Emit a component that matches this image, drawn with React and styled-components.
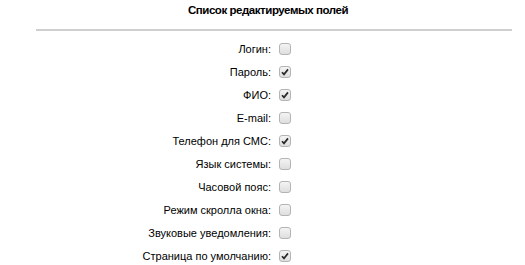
import React from "react";
import styled, { createGlobalStyle } from "styled-components";

const Global = createGlobalStyle`
  html, body { margin: 0; padding: 0; background: #fff; }
  body { font-family: "Liberation Sans", Arial, sans-serif; }
`;

const Page = styled.div`
  width: 525px;
  height: 265px;
  overflow: hidden;
`;

const Title = styled.div`
  height: 21px;
  line-height: 21px;
  font-size: 11.5px;
  font-weight: bold;
  letter-spacing: -0.45px;
  color: #000;
  text-align: center;
  padding-left: 11px;
`;

const Rule = styled.div`
  margin: 8px 13px 0 36px;
  height: 2px;
  background: #cfcfcf;
`;

const List = styled.div`
  padding-top: 6px;
  display: flex;
  flex-direction: column;
`;

const Row = styled.label`
  display: grid;
  grid-template-columns: 271px 12px;
  column-gap: 8px;
  align-items: center;
  height: 23px;
`;

const Label = styled.span`
  text-align: right;
  font-size: 11px;
  color: #000;
  white-space: nowrap;
`;

const Box = styled.span`
  width: 10px;
  height: 10px;
  border: 1px solid #b4b4b4;
  border-radius: 3px;
  background: linear-gradient(#f4f4f4, #dedede);
  display: flex;
  align-items: center;
  justify-content: center;
`;

const fields = [
  ["Логин:", false],
  ["Пароль:", true],
  ["ФИО:", true],
  ["E-mail:", false],
  ["Телефон для СМС:", true],
  ["Язык системы:", false],
  ["Часовой пояс:", false],
  ["Режим скролла окна:", false],
  ["Звуковые уведомления:", false],
  ["Страница по умолчанию:", true],
];

function Check({ checked }) {
  return (
    <Box>
      {checked && (
        <svg width="8" height="8" viewBox="0 0 8 8">
          <path d="M1 4.2 L3 6.4 L7 1.4" fill="none" stroke="#2a2a2a" strokeWidth="1.7" />
        </svg>
      )}
    </Box>
  );
}

export default function App() {
  return (
    <Page>
      <Global />
      <Title>Список редактируемых полей</Title>
      <Rule />
      <List>
        {fields.map(([label, checked]) => (
          <Row key={label}>
            <Label>{label}</Label>
            <Check checked={checked} />
          </Row>
        ))}
      </List>
    </Page>
  );
}
